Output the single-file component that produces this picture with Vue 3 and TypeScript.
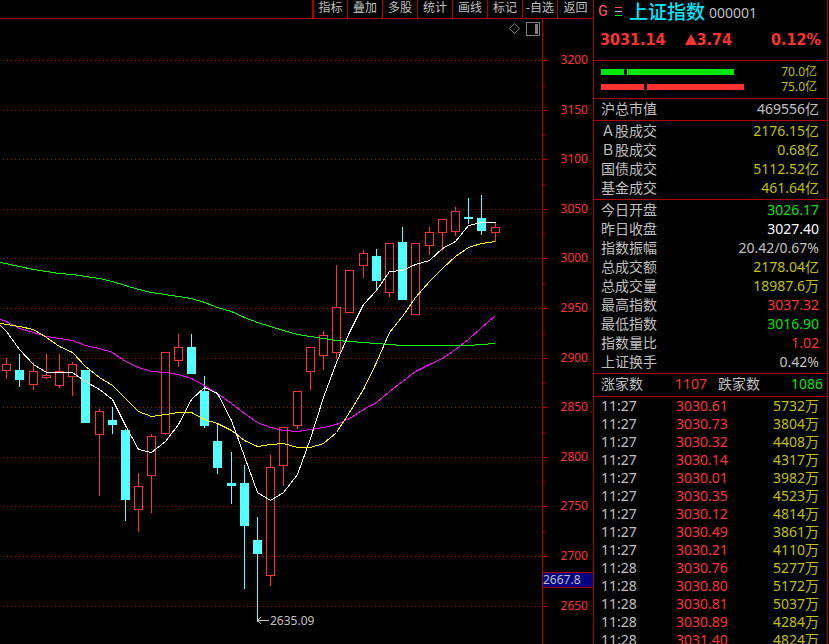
<script setup lang="ts">
type Candle = {
  x: number
  high: number
  top: number
  bottom: number
  low: number
  up: boolean
}
type Tone = 'plain' | 'white' | 'red' | 'green' | 'yellow'
type Row = { label: string; value: string; tone: Tone }

const tools: string[] = ['指标', '叠加', '多股', '统计', '画线', '标记', '-自选', '返回']

const levels = [
  { price: 3200, y: 60 },
  { price: 3150, y: 110 },
  { price: 3100, y: 159 },
  { price: 3050, y: 209 },
  { price: 3000, y: 258 },
  { price: 2950, y: 308 },
  { price: 2900, y: 358 },
  { price: 2850, y: 407 },
  { price: 2800, y: 457 },
  { price: 2750, y: 506 },
  { price: 2700, y: 556 },
  { price: 2650, y: 606 },
]
const minorTicks: number[] = levels.slice(0, -1).map((l) => l.y + 25)

// x centre, high, body top, body bottom, low, rising (1) or falling (0)
const raw: number[][] = [
  [6, 358, 364, 371, 379, 1],
  [19, 354, 370, 380, 387, 0],
  [33, 362, 371, 385, 390, 1],
  [46, 354, 375, 378, 379, 1],
  [59, 354, 371, 386, 388, 1],
  [72, 362, 364, 377, 396, 1],
  [85, 370, 370, 423, 423, 0],
  [99, 409, 411, 435, 496, 1],
  [112, 407, 420, 425, 434, 0],
  [125, 429, 430, 500, 521, 0],
  [138, 473, 486, 510, 532, 1],
  [151, 434, 436, 476, 513, 1],
  [165, 352, 352, 434, 435, 1],
  [178, 334, 347, 361, 367, 1],
  [191, 334, 347, 374, 374, 0],
  [204, 376, 391, 426, 428, 0],
  [217, 424, 441, 468, 474, 0],
  [231, 452, 483, 486, 504, 0],
  [244, 465, 483, 526, 589, 0],
  [257, 517, 540, 554, 622, 0],
  [270, 455, 467, 576, 586, 1],
  [283, 427, 427, 466, 486, 1],
  [297, 391, 391, 426, 429, 1],
  [310, 347, 347, 372, 390, 1],
  [323, 331, 335, 356, 370, 1],
  [336, 265, 307, 353, 359, 1],
  [349, 270, 270, 313, 313, 1],
  [363, 250, 253, 266, 278, 1],
  [376, 249, 256, 281, 291, 0],
  [389, 243, 243, 293, 297, 1],
  [402, 227, 242, 300, 300, 0],
  [415, 243, 243, 315, 315, 1],
  [429, 227, 232, 246, 255, 1],
  [442, 219, 219, 233, 251, 1],
  [455, 207, 211, 232, 236, 1],
  [468, 198, 217, 219, 224, 0],
  [481, 195, 218, 231, 235, 0],
  [495, 222, 227, 233, 242, 1],
]
const candles: Candle[] = raw.map(([x, high, top, bottom, low, up]) => ({
  x,
  high,
  top,
  bottom,
  low,
  up: up === 1,
}))

const averages = [
  {
    name: 'ma60',
    points:
      '0,262 19,266 33,269 59,273 72,274 99,278 112,281 125,285 138,289 151,292 178,296 191,298 204,302 217,307 231,311 244,317 257,322 270,326 283,330 297,334 310,336 323,338 336,340 349,341 363,342 389,344 402,345 468,345 481,344 495,343',
  },
  {
    name: 'ma20',
    points:
      '0,319 6,321 19,328 33,332 46,336 59,338 72,340 85,345 99,348 112,352 125,361 138,367 151,371 165,372 178,374 191,378 204,385 217,393 231,403 244,413 257,422 270,427 283,430 297,431 310,429 323,427 336,424 349,418 363,409 376,402 389,391 402,381 415,371 429,364 442,358 455,349 468,339 481,327 495,315',
  },
  {
    name: 'ma10',
    points:
      '0,323 19,326 33,329 46,337 59,346 72,352 85,366 99,377 112,385 125,398 138,411 151,416 165,414 178,412 191,412 204,419 217,423 231,430 244,440 257,446 270,444 283,443 297,447 310,447 323,443 336,432 349,412 363,389 376,362 389,332 402,316 415,297 429,281 442,268 455,256 468,247 481,243 495,241',
  },
  {
    name: 'ma5',
    points:
      '0,325 6,331 19,349 33,364 46,372 72,372 85,381 99,389 112,399 125,425 138,449 151,452 165,441 178,424 191,399 204,387 217,393 231,420 244,456 257,492 270,500 283,492 297,474 310,438 323,397 336,362 349,332 363,304 376,290 389,271 402,270 415,264 429,260 442,248 455,241 468,225 481,222 495,222',
  },
]

const turnover: Row[] = [
  { label: 'Ａ股成交', value: '2176.15亿', tone: 'yellow' },
  { label: 'Ｂ股成交', value: '0.68亿', tone: 'yellow' },
  { label: '国债成交', value: '5112.52亿', tone: 'yellow' },
  { label: '基金成交', value: '461.64亿', tone: 'yellow' },
]
const session: Row[] = [
  { label: '今日开盘', value: '3026.17', tone: 'green' },
  { label: '昨日收盘', value: '3027.40', tone: 'white' },
  { label: '指数振幅', value: '20.42/0.67%', tone: 'plain' },
  { label: '总成交额', value: '2178.04亿', tone: 'yellow' },
  { label: '总成交量', value: '18987.6万', tone: 'yellow' },
  { label: '最高指数', value: '3037.32', tone: 'red' },
  { label: '最低指数', value: '3016.90', tone: 'green' },
  { label: '指数量比', value: '1.02', tone: 'red' },
  { label: '上证换手', value: '0.42%', tone: 'plain' },
]
const groups: Row[][] = [
  [{ label: '沪总市值', value: '469556亿', tone: 'plain' }],
  turnover,
  session,
]

const flows = [
  { tone: 'green', parts: [23, 107], value: '70.0亿' },
  { tone: 'red', parts: [43, 97], value: '75.0亿' },
]

const trades: string[][] = [
  ['11:27', '3030.61', '5732万'],
  ['11:27', '3030.73', '3804万'],
  ['11:27', '3030.32', '4408万'],
  ['11:27', '3030.14', '4317万'],
  ['11:27', '3030.01', '3982万'],
  ['11:27', '3030.35', '4523万'],
  ['11:27', '3030.12', '4814万'],
  ['11:27', '3030.49', '3861万'],
  ['11:27', '3030.21', '4110万'],
  ['11:28', '3030.76', '5277万'],
  ['11:28', '3030.80', '5172万'],
  ['11:28', '3030.81', '5037万'],
  ['11:28', '3030.89', '4284万'],
  ['11:28', '3031.40', '4824万'],
]
</script>

<template>
  <div class="terminal">
    <main class="chart">
      <nav class="toolbar">
        <button v-for="tool in tools" :key="tool" type="button">{{ tool }}</button>
      </nav>
      <div class="canvas">
        <svg class="plot" viewBox="0 19 542 625" preserveAspectRatio="xMaxYMin meet">
          <line v-for="l in levels" :key="l.price" class="grid" x1="3" x2="542" :y1="l.y + 0.5" :y2="l.y + 0.5" />
          <g v-for="c in candles" :key="c.x" :class="c.up ? 'rise' : 'fall'">
            <rect class="wick" :x="c.x" :y="c.high" width="1" :height="c.top - c.high" />
            <rect class="wick" :x="c.x" :y="c.bottom" width="1" :height="c.low - c.bottom" />
            <rect v-if="c.up" class="body" :x="c.x - 3.5" :y="c.top + 0.5" width="8" :height="c.bottom - c.top - 1" />
            <rect v-else class="body" :x="c.x - 4" :y="c.top" width="9" :height="c.bottom - c.top" />
          </g>
          <g transform="translate(0.5 0.5)">
            <polyline v-for="a in averages" :key="a.name" :class="['average', a.name]" :points="a.points" />
          </g>
          <path class="arrow" d="M257.5 620.5H269M261 617l-3.5 3.5 3.5 3.5" />
          <text class="low-mark" x="270" y="625">2635.09</text>
          <path class="mark" d="M514.5 23.5l5 5-5 5-5-5z" />
          <rect class="mark" x="526.5" y="22.5" width="13" height="13" />
          <rect class="mark-fill" x="535" y="24" width="3" height="10" />
        </svg>
        <svg class="axis" viewBox="542 19 51 625" preserveAspectRatio="xMinYMin meet">
          <rect class="rule" x="542" y="19" width="1" height="625" />
          <rect v-for="y in minorTicks" :key="y" class="rule" x="543" :y="y" width="2" height="1" />
          <g v-for="l in levels" :key="l.price">
            <rect class="rule" x="543" :y="l.y" width="5" height="1" />
            <text class="scale" x="588" :y="l.y + 4">{{ l.price }}</text>
          </g>
          <rect class="cursor-box" x="542.5" y="572.5" width="52" height="15" />
          <text class="cursor-text" x="543" y="584">2667.8</text>
        </svg>
      </div>
    </main>

    <aside class="quote">
      <header class="head">
        <div class="name">
          <span class="flag">G</span>
          <svg class="menu" viewBox="0 0 8 10" width="8" height="10">
            <rect width="7" height="1" y="0" fill="#ff5050" />
            <rect width="7" height="1" y="4" fill="#c0c0c0" />
            <rect width="7" height="1" y="8" fill="#00e600" />
          </svg>
          <h1>上证指数</h1>
          <span class="code">000001</span>
        </div>
        <div class="price">
          <span class="last">3031.14</span>
          <span class="change">
            <svg viewBox="0 0 12 11" width="12" height="11"><path d="M6 0l6 11H0z" fill="#ff3232" /></svg>3.74
          </span>
          <span class="percent">0.12%</span>
        </div>
      </header>

      <section class="flows">
        <div v-for="f in flows" :key="f.tone" class="flow">
          <span
            v-for="(w, i) in f.parts"
            :key="i"
            :class="['bar', f.tone]"
            :style="{ width: w + 'px' }"
          ></span>
          <span class="amount">{{ f.value }}</span>
        </div>
      </section>

      <table v-for="(rows, i) in groups" :key="i" class="facts">
        <tbody>
          <tr v-for="r in rows" :key="r.label">
            <th scope="row">{{ r.label }}</th>
            <td :class="r.tone">{{ r.value }}</td>
          </tr>
        </tbody>
      </table>

      <dl class="breadth">
        <dt>涨家数</dt>
        <dd class="red">1107</dd>
        <dt>跌家数</dt>
        <dd class="green">1086</dd>
      </dl>

      <table class="trades">
        <tbody>
          <tr v-for="(t, i) in trades" :key="i">
            <td>{{ t[0] }}</td>
            <td class="red">{{ t[1] }}</td>
            <td class="yellow">{{ t[2] }}</td>
          </tr>
        </tbody>
      </table>
    </aside>
  </div>
</template>

<style>
body {
  margin: 0;
  background: #000;
}
</style>

<style scoped>
.terminal {
  display: flex;
  height: 100vh;
  overflow: hidden;
  background: #000;
  color: #c0c0c0;
  font-family: 'Noto Sans', 'Noto Sans CJK SC', sans-serif;
  font-size: 14px;
}
.chart {
  flex: 1;
  min-width: 0;
  display: flex;
  flex-direction: column;
}
.toolbar {
  display: flex;
  justify-content: flex-end;
  height: 18px;
  border-bottom: 1px solid #b00000;
}
.toolbar button {
  box-sizing: border-box;
  width: 35px;
  padding: 0 0 3px;
  border: 0;
  border-left: 1px solid #b00000;
  background: none;
  color: #c0c0c0;
  font: inherit;
  font-size: 12px;
  line-height: 15px;
  white-space: nowrap;
}
.toolbar button:first-child {
  border-left-width: 2px;
}
.toolbar button:last-child {
  width: 36px;
}
.canvas {
  flex: 1;
  min-height: 0;
  display: flex;
}
.plot {
  flex: 1;
  min-width: 0;
  height: 100%;
}
.axis {
  flex: none;
  width: 51px;
  height: 100%;
}
.grid {
  stroke: #b00000;
  stroke-dasharray: 1 3;
  shape-rendering: crispEdges;
}
.rise .wick {
  fill: #ff3232;
}
.rise .body {
  fill: none;
  stroke: #ff3232;
}
.fall rect {
  fill: #54ffff;
}
.average {
  fill: none;
  stroke-width: 1;
  shape-rendering: crispEdges;
}
.ma5 {
  stroke: #fff;
}
.ma10 {
  stroke: #ff0;
}
.ma20 {
  stroke: #f0f;
}
.ma60 {
  stroke: #0f0;
}
.arrow {
  fill: none;
  stroke: #c0c0c0;
}
.mark {
  fill: none;
  stroke: #808080;
}
.mark-fill {
  fill: #808080;
}
.rule {
  fill: #b00000;
}
.plot text,
.axis text {
  font-size: 12px;
}
.low-mark,
.cursor-text {
  fill: #c0c0c0;
}
.axis .scale {
  fill: #ff3232;
  text-anchor: end;
}
.cursor-box {
  fill: #000080;
  stroke: #b00000;
}
.quote {
  box-sizing: border-box;
  flex: none;
  width: 235px;
  margin-right: 1px;
  border: 1px solid #b00000;
  border-width: 0 1px;
}
.head {
  height: 60px;
  border-bottom: 1px solid #b00000;
}
.name {
  display: flex;
  align-items: center;
  height: 24px;
  padding-left: 4px;
}
.flag {
  width: 20px;
  color: #ff5050;
  font-family: 'Liberation Mono', monospace;
  font-size: 16px;
  line-height: 20px;
}
.menu {
  margin-left: -3px;
}
h1 {
  margin: 0 4px 0 6px;
  color: #00e6ff;
  font-size: 19px;
  font-weight: 500;
  line-height: 24px;
}
.price {
  display: flex;
  justify-content: space-between;
  padding: 6px 6px 0;
  color: #ff3232;
  font-family: 'DejaVu Sans Condensed', 'Noto Sans', sans-serif;
  font-size: 16px;
  font-weight: 700;
  line-height: 20px;
}
.change {
  margin-right: 20px;
}
.flows {
  height: 37px;
  border-bottom: 1px solid #b00000;
}
.flow {
  display: flex;
  align-items: center;
  gap: 3px;
  height: 15px;
  padding: 0 10px 0 7px;
}
.flow:first-child {
  padding-top: 3px;
}
.bar {
  height: 6px;
}
.bar.green {
  background: #00e600;
}
.bar.red {
  background: #ff3232;
}
.amount {
  margin-left: auto;
  color: #c0c000;
  font-size: 12px;
  line-height: 15px;
}
table {
  width: 100%;
  border-collapse: collapse;
}
th,
td {
  padding: 0;
  font-weight: 400;
  white-space: nowrap;
}
.facts {
  border-collapse: separate;
  border-spacing: 0;
  padding: 0 8px 2px 7px;
  border-bottom: 1px solid #b00000;
}
.facts tr {
  height: 19px;
}
.facts th {
  text-align: left;
  line-height: 19px;
}
.facts td {
  text-align: right;
  line-height: 19px;
}
.breadth {
  display: grid;
  grid-template-columns: 74px 43px 1fr auto;
  margin: 0;
  padding: 0 4px 2px 7px;
  border-bottom: 1px solid #b00000;
  line-height: 20px;
}
dd {
  margin: 0;
}
.trades td {
  height: 18px;
  line-height: 18px;
}
.trades td:first-child {
  width: 75px;
  padding-left: 7px;
}
.trades td:last-child {
  padding-right: 8px;
  text-align: right;
}
.white {
  color: #fff;
}
.red {
  color: #ff3232;
}
.green {
  color: #00e600;
}
.yellow {
  color: #c0c000;
}
</style>
